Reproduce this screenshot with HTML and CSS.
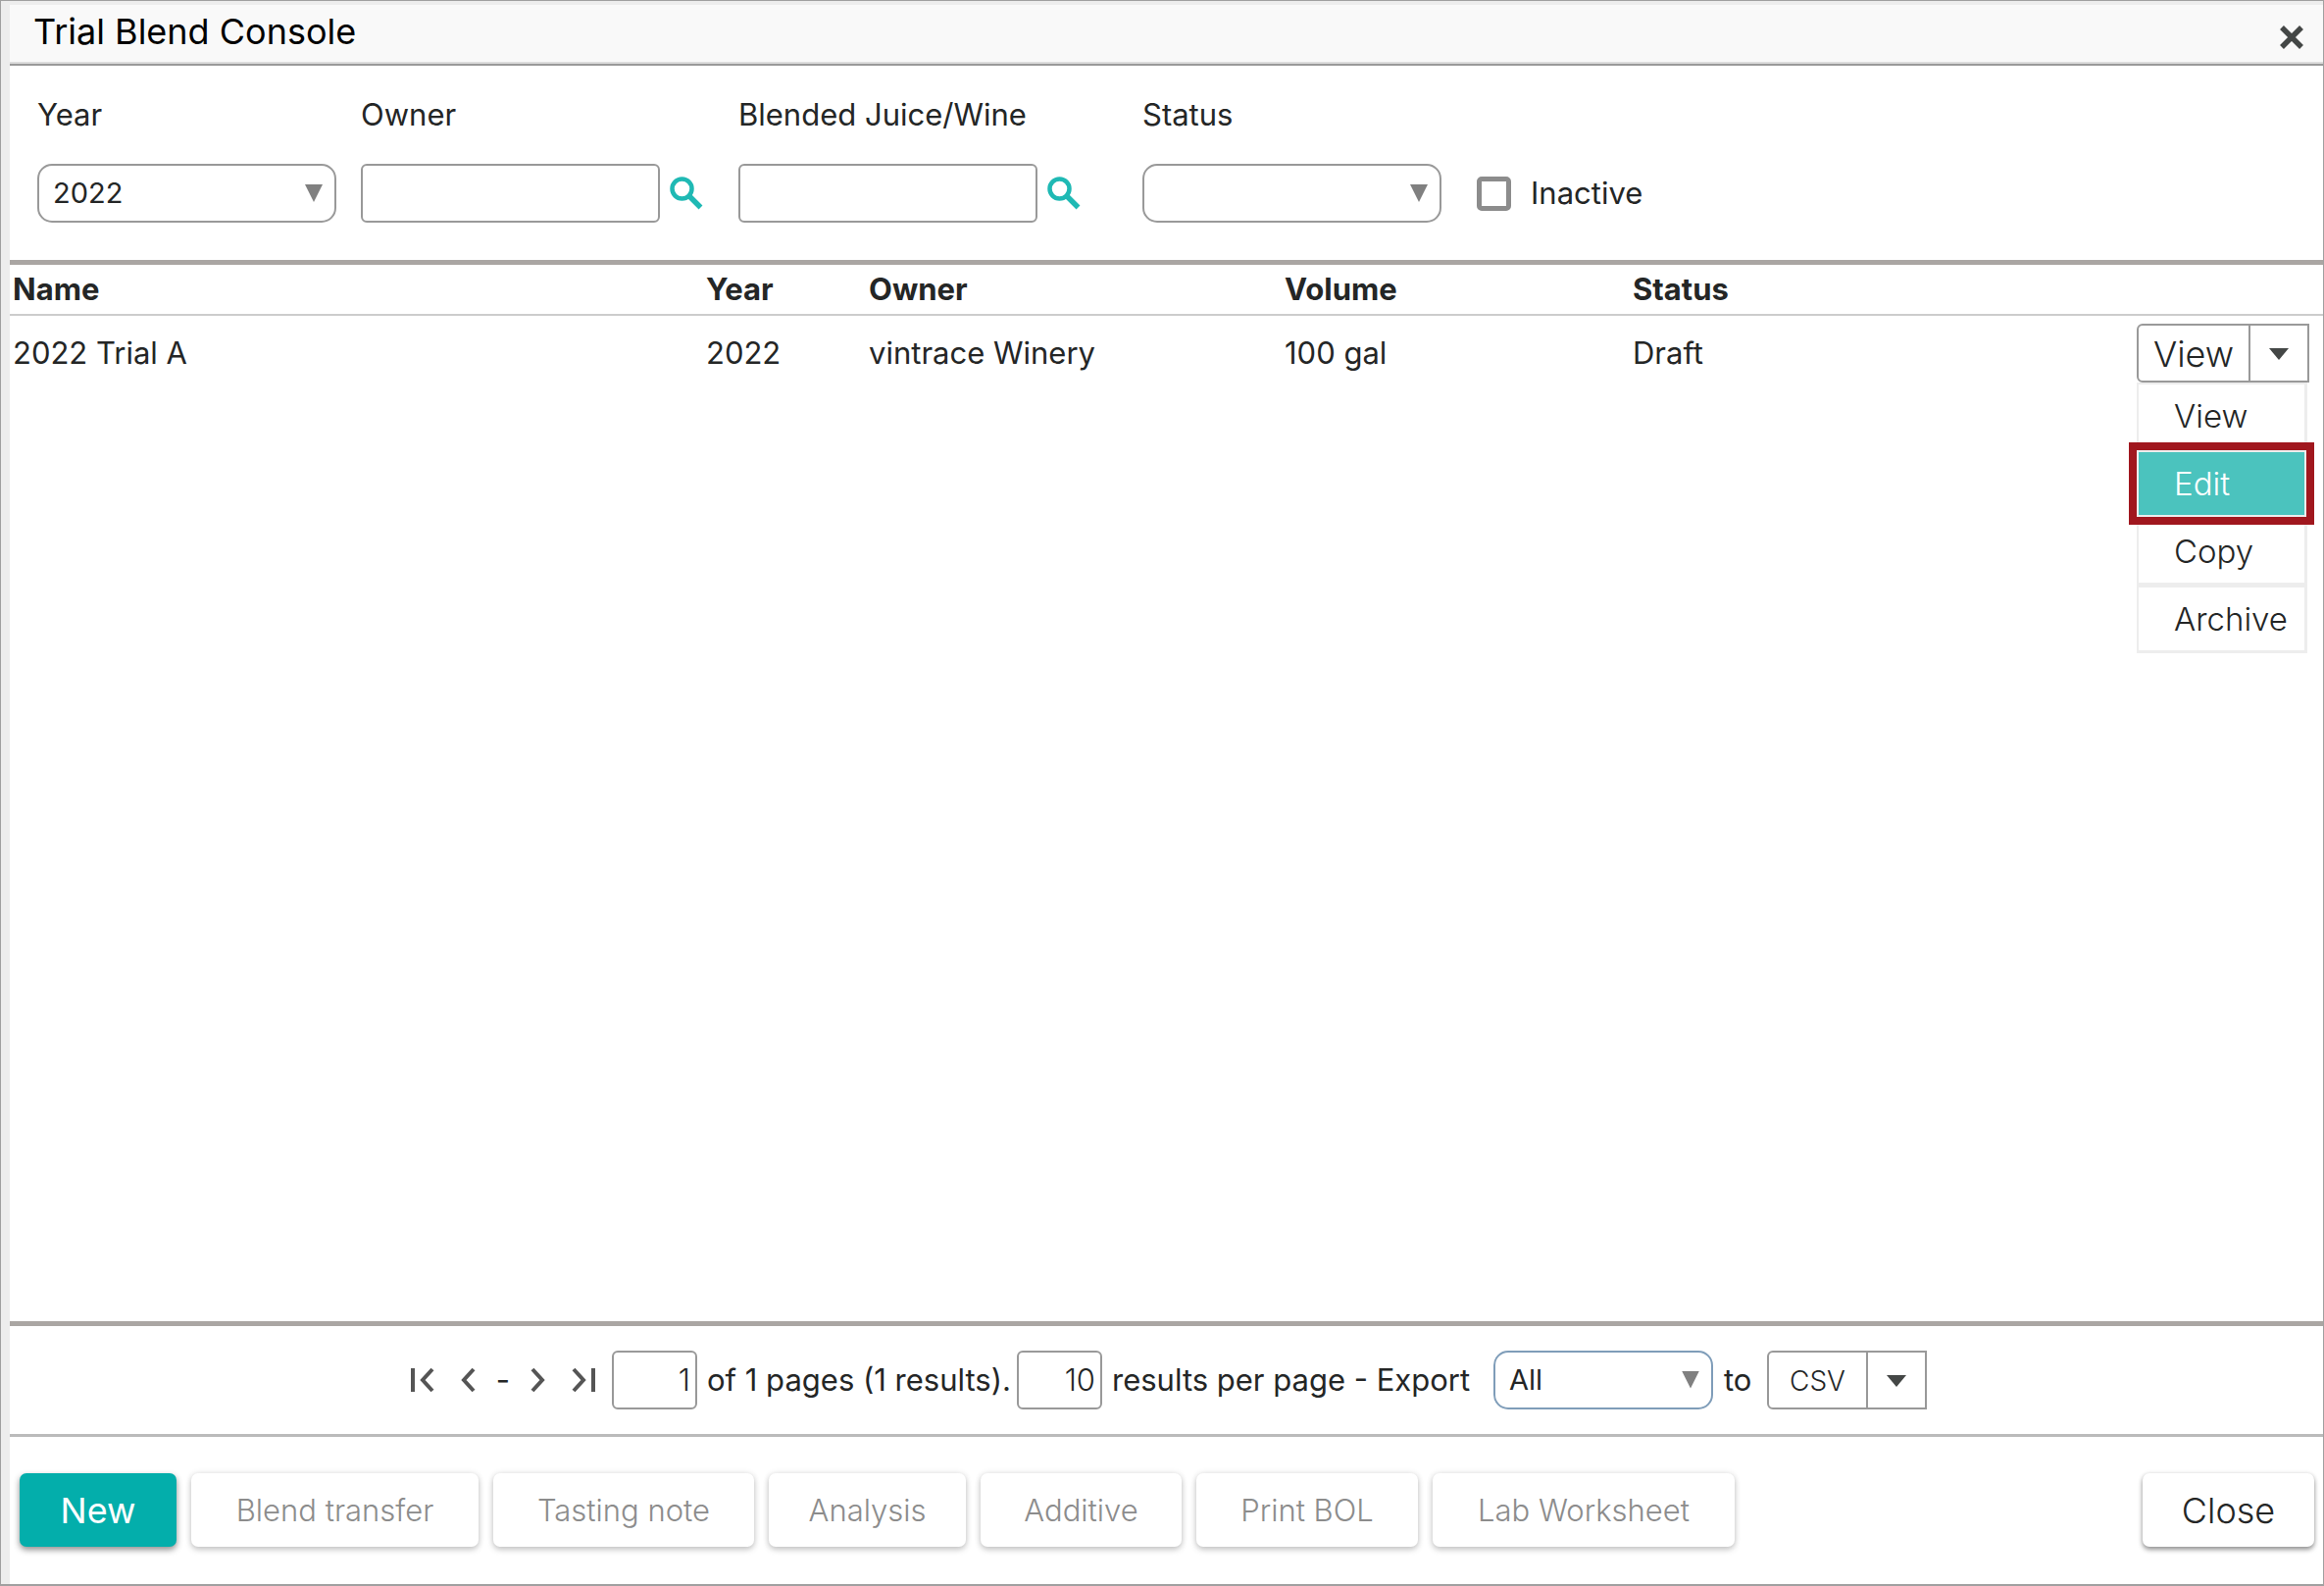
FILE: index.html
```html
<!DOCTYPE html>
<html lang="en">
<head>
<meta charset="utf-8">
<title>Trial Blend Console</title>
<link rel="stylesheet" href="styles.css">
</head>
<body>
<main class="window">
  <header class="titlebar">
    <h1 class="title">Trial Blend Console</h1>
    <button class="icon-button close-icon" type="button" aria-label="Close window">
      <svg width="26" height="26" viewBox="0 0 26 26"><path d="M3 3L23 23M23 3L3 23" fill="none" stroke="#444746" stroke-width="5.5"/></svg>
    </button>
  </header>

  <form class="filters">
    <div class="field">
      <label for="year">Year</label>
      <span class="select-box"><select id="year" class="control select"><option>2022</option></select></span>
    </div>
    <div class="field">
      <label for="owner">Owner</label>
      <span class="lookup">
        <input id="owner" class="control" type="text">
        <button class="icon-button" type="button" aria-label="Find owner">
          <svg width="34" height="34" viewBox="0 0 34 34"><g fill="none" stroke="#1fb9b4"><circle cx="12.500" cy="12.500" r="10" stroke-width="4.500"/><path d="M20 20L31.500 31.500" stroke-width="5.500"/></g></svg>
        </button>
      </span>
    </div>
    <div class="field field-wine">
      <label for="wine">Blended Juice/Wine</label>
      <span class="lookup">
        <input id="wine" class="control" type="text">
        <button class="icon-button" type="button" aria-label="Find juice or wine">
          <svg width="34" height="34" viewBox="0 0 34 34"><g fill="none" stroke="#1fb9b4"><circle cx="12.500" cy="12.500" r="10" stroke-width="4.500"/><path d="M20 20L31.500 31.500" stroke-width="5.500"/></g></svg>
        </button>
      </span>
    </div>
    <div class="field field-status">
      <label for="status">Status</label>
      <span class="select-box"><select id="status" class="control select"><option></option></select></span>
    </div>
    <label class="check"><input type="checkbox" class="checkbox">Inactive</label>
  </form>

  <section class="results">
    <table class="grid">
      <colgroup><col class="col-name"><col class="col-year"><col class="col-owner"><col class="col-volume"><col class="col-status"><col></colgroup>
      <thead>
        <tr><th>Name</th><th>Year</th><th>Owner</th><th>Volume</th><th>Status</th><th></th></tr>
      </thead>
      <tbody>
        <tr>
          <td>2022 Trial A</td><td>2022</td><td>vintrace Winery</td><td>100 gal</td><td>Draft</td>
          <td class="actions">
            <div class="split row-split">
              <button class="split-main" type="button">View</button>
              <button class="split-toggle" type="button" aria-label="More actions"><svg width="20" height="12" viewBox="0 0 20 12"><path d="M0 0H20L10 12Z" fill="#444746"/></svg></button>
              <div class="menu">
                <button class="menu-item" type="button">View</button>
                <button class="menu-item active" type="button">Edit</button>
                <button class="menu-item" type="button">Copy</button>
                <button class="menu-item" type="button">Archive</button>
              </div>
            </div>
          </td>
        </tr>
      </tbody>
    </table>
  </section>

  <nav class="pager">
    <div class="page-links">
      <button class="icon-button page-first" type="button" aria-label="First page"><svg width="26" height="26" viewBox="0 0 26 26"><path d="M3 1V25M23 2L13 13L23 24" fill="none" stroke="#555" stroke-width="4"/></svg></button>
      <button class="icon-button" type="button" aria-label="Previous page"><svg width="16" height="26" viewBox="0 0 16 26"><path d="M13 2L3 13L13 24" fill="none" stroke="#555" stroke-width="4"/></svg></button>
      <span class="dash">-</span>
      <button class="icon-button" type="button" aria-label="Next page"><svg width="16" height="26" viewBox="0 0 16 26"><path d="M3 2L13 13L3 24" fill="none" stroke="#555" stroke-width="4"/></svg></button>
      <button class="icon-button page-last" type="button" aria-label="Last page"><svg width="26" height="26" viewBox="0 0 26 26"><path d="M23 1V25M3 2L13 13L3 24" fill="none" stroke="#555" stroke-width="4"/></svg></button>
    </div>
    <input class="control number" type="text" value="1" aria-label="Page">
    <span class="pages">of 1 pages (1 results).</span>
    <input class="control number" type="text" value="10" aria-label="Results per page">
    <label class="export-label" for="export">results per page - Export</label>
    <span class="select-box export"><select id="export" class="control select"><option>All</option></select></span>
    <span class="to">to</span>
    <div class="split csv-split">
      <button class="split-main" type="button">CSV</button>
      <button class="split-toggle" type="button" aria-label="Export formats"><svg width="20" height="12" viewBox="0 0 20 12"><path d="M0 0H20L10 12Z" fill="#444746"/></svg></button>
    </div>
  </nav>

  <footer class="footer">
    <button class="button primary" type="button">New</button>
    <button class="button w-transfer" type="button" disabled>Blend transfer</button>
    <button class="button w-tasting" type="button" disabled>Tasting note</button>
    <button class="button w-analysis" type="button" disabled>Analysis</button>
    <button class="button w-additive" type="button" disabled>Additive</button>
    <button class="button w-bol" type="button" disabled>Print BOL</button>
    <button class="button w-lab" type="button" disabled>Lab Worksheet</button>
    <button class="button close" type="button">Close</button>
  </footer>
</main>
</body>
</html>
```
FILE: styles.css
```css
* { box-sizing: border-box; }

body {
  margin: 0;
  background: #fff;
  color: #242626;
  font: 400 31px/36px Inter, "Open Sans", sans-serif;
}

button, input, select {
  margin: 0;
  color: inherit;
  font: inherit;
}

.window {
  display: flex;
  flex-direction: column;
  min-height: 100vh;
  border: 1px solid #a0a0a0;
  border-bottom-width: 2px;
  box-shadow: inset 9px 0 #ededed, inset 0 4px #ededed;
  padding: 4px 0 0 9px;
}

.titlebar {
  display: flex;
  align-items: center;
  justify-content: space-between;
  height: 62px;
  padding: 0 19px 0 24px;
  background: #f9f9f9;
  border-bottom: 2px solid #999;
  box-shadow: inset 0 -2px #ddd;
}

.title {
  margin: 0;
  padding-bottom: 6px;
  color: #000;
  font-size: 36px;
  line-height: 40px;
  font-weight: 400;
}

.icon-button {
  display: flex;
  padding: 0;
  border: 0;
  background: none;
}

.close-icon { padding-top: 5px; }

.filters {
  display: flex;
  align-items: flex-end;
  height: 198px;
  padding: 0 28px 38px;
}

.field {
  display: flex;
  flex-direction: column;
  gap: 32px;
  margin-right: 25px;
}

.field-wine { margin-left: 11px; }
.field-status { margin-left: 38px; }

.lookup {
  display: flex;
  align-items: center;
  gap: 10px;
}

.control {
  display: block;
  width: 305px;
  height: 60px;
  padding: 0 6px;
  border: 2px solid #999;
  border-radius: 6px;
  background: #fff;
  outline: 0;
}

.select {
  width: 100%;
  padding: 0 14px;
  border-radius: 15px;
  font-size: 29px;
  appearance: none;
}

.select-box {
  position: relative;
  display: block;
  width: 305px;
}

.select-box::after {
  content: "";
  position: absolute;
  top: 21px;
  right: 14px;
  width: 18px;
  height: 18px;
  background: #808080;
  clip-path: polygon(0 0, 100% 0, 50% 100%);
  pointer-events: none;
}

.check {
  display: flex;
  align-items: center;
  gap: 20px;
  height: 60px;
  margin-left: 11px;
}

.checkbox {
  width: 35px;
  height: 35px;
  border: 5px solid #8c8c8c;
  border-radius: 5px;
  appearance: none;
}

.results {
  flex: 1;
  border-top: 5px solid #aaa6a3;
  border-bottom: 5px solid #aaa6a3;
}

.grid {
  width: 100%;
  border-collapse: collapse;
  table-layout: fixed;
}

.grid th {
  height: 51px;
  padding: 0 3px;
  border-bottom: 2px solid #ccc;
  font-weight: 700;
  text-align: left;
}

.grid td {
  height: 76px;
  padding: 0 3px;
}

.col-name { width: 707px; }
.col-year { width: 166px; }
.col-owner { width: 424px; }
.col-volume { width: 355px; }
.col-status { width: 300px; }

.grid .actions { padding: 0 14px 0 0; }

.split {
  position: relative;
  display: flex;
  height: 60px;
  border: 2px solid #999;
  border-radius: 6px 0 0 6px;
}

.row-split {
  width: 176px;
  margin-left: auto;
}

.csv-split { width: 163px; }

.split-main, .split-toggle {
  display: flex;
  align-items: center;
  justify-content: center;
  padding: 3px 0 0;
  border: 0;
  background: none;
}

.split-main {
  flex: 1;
  font-size: 36px;
  font-weight: 300;
}

.csv-split .split-main { font-size: 28px; }

.split-toggle {
  width: 60px;
  border-left: 2px solid #999;
}

.menu {
  position: absolute;
  top: 58px;
  left: -2px;
  display: flex;
  flex-direction: column;
  gap: 5px;
  width: 174px;
  padding: 2px 3px 3px 2px;
  background: #ededed;
}

.menu-item {
  height: 64px;
  padding: 0 0 0 36px;
  border: 0;
  background: #fff;
  font-size: 33px;
  font-weight: 300;
  text-align: left;
}

.menu-item.active {
  position: relative;
  z-index: 1;
  background: #4bc3be;
  color: #fff;
  outline: 8px solid #a0171e;
  outline-offset: 2px;
}

.pager {
  display: flex;
  align-items: center;
  height: 113px;
  padding: 0 0 1px 408px;
  border-bottom: 3px solid #bbb;
}

.page-links {
  display: flex;
  align-items: center;
  margin-right: 16px;
}

.page-first { margin-right: 26px; }
.page-last { margin-left: 26px; }

.dash {
  width: 54px;
  text-align: center;
}

.number {
  width: 87px;
  padding: 0 5px;
  font-weight: 300;
  text-align: right;
}

.pages { width: 326px; padding-left: 10px; }
.export-label { width: 399px; padding-left: 10px; }
.export { width: 224px; }
.export .select { border-color: #7f9db9; }
.to { width: 55px; padding-left: 11px; }

.footer {
  display: flex;
  gap: 15px;
  padding: 37px 9px 38px 10px;
}

.button {
  height: 75px;
  padding: 0;
  border: 0;
  border-radius: 7px;
  background: #fff;
  box-shadow: 0 3px 6px rgba(0, 0, 0, .2), 0 0 6px rgba(0, 0, 0, .1);
  font-size: 31px;
  font-weight: 300;
}

.button:disabled { color: #8c8c8c; }

.primary, .close { font-size: 36px; }

.primary {
  width: 160px;
  background: #03aeab;
  color: #fff;
  font-weight: 400;
  box-shadow: 0 3px 6px rgba(0, 0, 0, .45);
}

.w-transfer { width: 293px; }
.w-tasting { width: 266px; }
.w-analysis { width: 201px; }
.w-additive { width: 205px; }
.w-bol { width: 226px; }
.w-lab { width: 308px; }

.close {
  width: 175px;
  margin-left: auto;
  box-shadow: 0 3px 5px rgba(0, 0, 0, .4), 0 0 4px rgba(0, 0, 0, .1);
}
```
